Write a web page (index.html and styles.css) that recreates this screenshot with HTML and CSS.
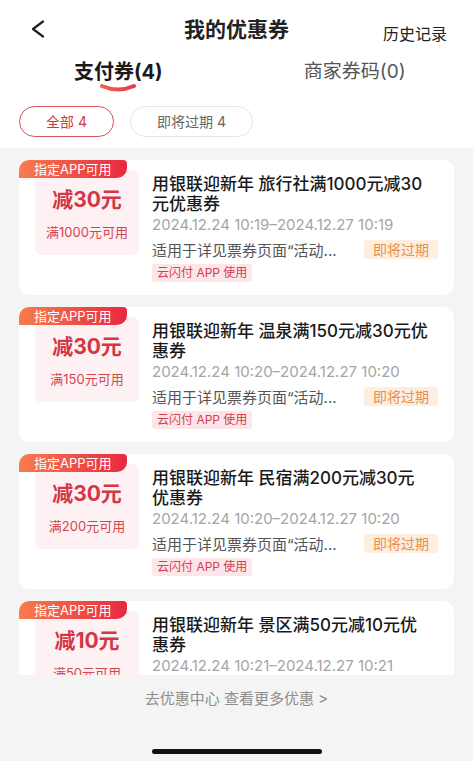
FILE: index.html
```html
<!DOCTYPE html>
<html>
<head>
    <meta charset="UTF-8">
    <title>我的优惠券</title>
    <link rel="stylesheet" href="styles.css">
</head>
<body>
    <div class="page">
        <div class="head">
            <div class="topbar">
                <span class="back">
                    <svg width="16" height="18" viewBox="0 0 16 18"><path d="M13 1.5 L3 9 L13 16.5" fill="none" stroke="#222" stroke-width="2.2" stroke-linecap="round" stroke-linejoin="round"/></svg>
                </span>
                <h1 class="title">我的优惠券</h1>
                <span class="history">历史记录</span>
            </div>

            <div class="tabs">
                <div class="tab active">
                    <span>支付券(4)</span>
                    <svg class="tab-line" width="38" height="9" viewBox="0 0 38 9">
                        <defs>
                            <linearGradient id="lineGrad" x1="0" y1="0" x2="1" y2="0">
                                <stop offset="0" stop-color="#f2623f"/>
                                <stop offset="1" stop-color="#e6385a"/>
                            </linearGradient>
                        </defs>
                        <path d="M3 3 Q19 10 35 3" fill="none" stroke="url(#lineGrad)" stroke-width="4" stroke-linecap="round"/>
                    </svg>
                </div>
                <div class="tab">
                    <span>商家券码(0)</span>
                </div>
            </div>

            <div class="filters">
                <span class="chip chip-on">全部 4</span>
                <span class="chip">即将过期 4</span>
            </div>
        </div>

        <!-- 券列表 -->
        <div class="list">
            <div class="card">
                <span class="card-tag">指定APP可用</span>
                <div class="amount">
                    <div class="amount-value">减30元</div>
                    <div class="amount-rule">满1000元可用</div>
                </div>
                <div class="info">
                    <div class="info-title">用银联迎新年 旅行社满1000元减30<br>元优惠券</div>
                    <div class="info-date">2024.12.24 10:19–2024.12.27 10:19</div>
                    <div class="info-row">
                        <span class="info-desc">适用于详见票券页面“活动...</span>
                        <span class="soon">即将过期</span>
                    </div>
                    <span class="app-tag">云闪付 APP 使用</span>
                </div>
            </div>

            <div class="card">
                <span class="card-tag">指定APP可用</span>
                <div class="amount">
                    <div class="amount-value">减30元</div>
                    <div class="amount-rule">满150元可用</div>
                </div>
                <div class="info">
                    <div class="info-title">用银联迎新年 温泉满150元减30元优<br>惠券</div>
                    <div class="info-date">2024.12.24 10:20–2024.12.27 10:20</div>
                    <div class="info-row">
                        <span class="info-desc">适用于详见票券页面“活动...</span>
                        <span class="soon">即将过期</span>
                    </div>
                    <span class="app-tag">云闪付 APP 使用</span>
                </div>
            </div>

            <div class="card">
                <span class="card-tag">指定APP可用</span>
                <div class="amount">
                    <div class="amount-value">减30元</div>
                    <div class="amount-rule">满200元可用</div>
                </div>
                <div class="info">
                    <div class="info-title">用银联迎新年 民宿满200元减30元<br>优惠券</div>
                    <div class="info-date">2024.12.24 10:20–2024.12.27 10:20</div>
                    <div class="info-row">
                        <span class="info-desc">适用于详见票券页面“活动...</span>
                        <span class="soon">即将过期</span>
                    </div>
                    <span class="app-tag">云闪付 APP 使用</span>
                </div>
            </div>

            <div class="card">
                <span class="card-tag">指定APP可用</span>
                <div class="amount">
                    <div class="amount-value">减10元</div>
                    <div class="amount-rule">满50元可用</div>
                </div>
                <div class="info">
                    <div class="info-title">用银联迎新年 景区满50元减10元优<br>惠券</div>
                    <div class="info-date">2024.12.24 10:21–2024.12.27 10:21</div>
                    <div class="info-row">
                        <span class="info-desc">适用于详见票券页面“活动...</span>
                        <span class="soon">即将过期</span>
                    </div>
                    <span class="app-tag">云闪付 APP 使用</span>
                </div>
            </div>
        </div>

        <div class="more">去优惠中心 查看更多优惠 &gt;</div>
        <div class="home-bar"></div>
    </div>
</body>
</html>
```

FILE: styles.css
```css
body {
    margin: 0;
    font-family: Inter, "Noto Sans CJK SC", sans-serif;
    background-color: #f4f4f4;
    color: #1a1a1a;
}

.page {
    width: 473px;
    height: 761px;
    overflow: hidden;
}

/* 顶部 */
.head {
    background-color: #fff;
    padding-bottom: 11px;
}

.topbar {
    display: grid;
    grid-template-columns: 1fr auto 1fr;
    align-items: center;
    height: 56px;
}

.back {
    display: flex;
    padding-left: 30px;
    padding-top: 2px;
}

.title {
    margin: 0;
    font-size: 21px;
    font-weight: 700;
    color: #222;
}

.history {
    justify-self: end;
    padding-right: 26px;
    margin-top: 10px;
    font-size: 16px;
    color: #222;
}

.tabs {
    display: grid;
    grid-template-columns: 1fr 1fr;
    padding-top: 2px;
}

.tab {
    display: flex;
    flex-direction: column;
    align-items: center;
    font-size: 19px;
    line-height: 28px;
    color: #555;
}

.tab.active {
    font-size: 20px;
    font-weight: 700;
    color: #1a1a1a;
}

.tab-line {
    margin-top: -3px;
}

.filters {
    display: flex;
    gap: 16px;
    padding: 0 19px;
    margin-top: 14px;
}

.chip {
    height: 31px;
    line-height: 29px;
    padding: 0 26px;
    border: 1px solid #e6e6e6;
    border-radius: 16px;
    box-sizing: border-box;
    font-size: 14px;
    color: #666;
    background-color: #fff;
}

.chip-on {
    border-color: #d4525a;
    color: #cc3b44;
}

/* 券列表 */
.list {
    display: flex;
    flex-direction: column;
    gap: 12px;
    height: 527px;
    padding: 12px 19px 0;
    box-sizing: border-box;
    overflow: hidden;
}

.card {
    position: relative;
    flex: none;
    display: flex;
    align-items: flex-start;
    gap: 13px;
    height: 135px;
    padding: 10px 16px 0;
    box-sizing: border-box;
    background-color: #fff;
    border-radius: 10px;
}

.card-tag {
    position: absolute;
    top: 0;
    left: 0;
    height: 18px;
    line-height: 18px;
    padding: 0 15px;
    font-size: 13px;
    color: #fff;
    background: linear-gradient(90deg, #f77c4e, #e8283f);
    border-radius: 10px 4px 10px 0;
}

.amount {
    flex: none;
    width: 104px;
    height: 85px;
    padding-top: 16px;
    box-sizing: border-box;
    text-align: center;
    background-color: #fdf1f3;
    border-radius: 6px;
}

.amount-value {
    font-size: 21px;
    line-height: 28px;
    font-weight: 700;
    color: #d33646;
}

.amount-rule {
    margin-top: 9px;
    font-size: 13px;
    line-height: 18px;
    color: #d2474f;
}

.info {
    flex: 1;
    min-width: 0;
    padding-top: 4px;
}

.info-title {
    font-size: 17px;
    line-height: 20px;
    font-weight: 500;
    color: #1a1a1a;
    white-space: nowrap;
}

.info-date {
    margin-top: 1px;
    font-size: 15px;
    line-height: 20px;
    color: #a5a5a5;
}

.info-row {
    display: flex;
    justify-content: space-between;
    align-items: center;
    height: 20px;
    margin-top: 4px;
}

.info-desc {
    font-size: 15px;
    color: #555;
}

.soon {
    height: 19px;
    line-height: 19px;
    padding: 0 9px;
    font-size: 14px;
    color: #e8914f;
    background-color: #fdeee0;
    border-radius: 3px;
}

.app-tag {
    display: inline-block;
    margin-top: 5px;
    height: 18px;
    line-height: 18px;
    padding: 0 5px;
    font-size: 12px;
    color: #d2404f;
    background-color: #fde6e9;
    border-radius: 3px;
}

/* 底部 */
.more {
    padding-top: 14px;
    line-height: 20px;
    text-align: center;
    font-size: 15px;
    color: #8e8e8e;
}

.home-bar {
    width: 170px;
    height: 5px;
    margin: 40px auto 0;
    background-color: #111;
    border-radius: 3px;
}
```
